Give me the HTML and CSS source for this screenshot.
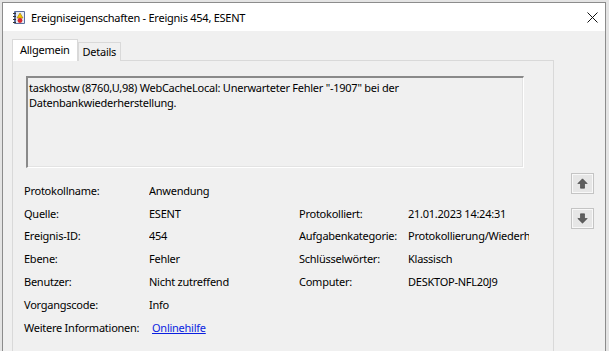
FILE: index.html
```html
<!DOCTYPE html>
<html lang="de">
<head>
  <meta charset="UTF-8">
  <meta name="viewport" content="width=device-width, initial-scale=1.0">
  <title>Ereigniseigenschaften - Ereignis 454, ESENT</title>
  <link rel="stylesheet" href="styles.css">
</head>
<body>
  <div class="window">
    <div class="titlebar">
      <svg class="app-icon" width="14" height="15" viewBox="0 0 14 15">
        <rect x="2" y="1" width="11" height="13" rx="1" fill="#5b6f9e"/>
        <rect x="4" y="2" width="8" height="11" fill="#e8ecf4"/>
        <rect x="1" y="3" width="3" height="1" fill="#333"/>
        <rect x="1" y="6" width="3" height="1" fill="#333"/>
        <rect x="1" y="9" width="3" height="1" fill="#333"/>
        <rect x="1" y="12" width="3" height="1" fill="#333"/>
        <polygon points="8,3 11,8 5,8" fill="#f5c400" stroke="#a07800" stroke-width="0.6"/>
        <circle cx="8" cy="10.5" r="2.4" fill="#d8282f"/>
      </svg>
      <span class="title">Ereigniseigenschaften - Ereignis 454, ESENT</span>
      <span class="close-btn">
        <svg width="11" height="11" viewBox="0 0 11 11">
          <path d="M0.5 0.5 L10.5 10.5 M10.5 0.5 L0.5 10.5" stroke="#111" stroke-width="1"/>
        </svg>
      </span>
    </div>

    <div class="content">
      <div class="sheet-area">
        <div class="tabs">
          <div class="tab active">Allgemein</div>
          <div class="tab">Details</div>
        </div>
        <div class="sheet">
          <div class="message">taskhostw (8760,U,98) WebCacheLocal: Unerwarteter Fehler "-1907" bei der Datenbankwiederherstellung.</div>

          <div class="fields">
            <span class="label">Protokollname:</span>
            <span class="value">Anwendung</span>
            <span></span>
            <span></span>

            <span class="label">Quelle:</span>
            <span class="value">ESENT</span>
            <span class="label">Protokolliert:</span>
            <span class="value">21.01.2023 14:24:31</span>

            <span class="label">Ereignis-ID:</span>
            <span class="value">454</span>
            <span class="label">Aufgabenkategorie:</span>
            <span class="value">Protokollierung/Wiederherstellung</span>

            <span class="label">Ebene:</span>
            <span class="value">Fehler</span>
            <span class="label">Schlüsselwörter:</span>
            <span class="value">Klassisch</span>

            <span class="label">Benutzer:</span>
            <span class="value">Nicht zutreffend</span>
            <span class="label">Computer:</span>
            <span class="value">DESKTOP-NFL20J9</span>

            <span class="label">Vorgangscode:</span>
            <span class="value">Info</span>
            <span></span>
            <span></span>

            <span class="label">Weitere Informationen:</span>
            <span class="value"><a href="#" class="help-link">Onlinehilfe</a></span>
            <span></span>
            <span></span>
          </div>
        </div>
      </div>

      <div class="nav-buttons">
        <button class="nav-btn" title="Vorheriges Ereignis">
          <svg width="11" height="11" viewBox="0 0 11 11">
            <polygon points="5.5,0.8 10.2,5.5 7.5,5.5 7.5,10.2 3.5,10.2 3.5,5.5 0.8,5.5" fill="#5e5e5e" stroke="#3e3e3e" stroke-width="0.6"/>
          </svg>
        </button>
        <button class="nav-btn" title="Nächstes Ereignis">
          <svg width="11" height="11" viewBox="0 0 11 11">
            <polygon points="5.5,10.2 10.2,5.5 7.5,5.5 7.5,0.8 3.5,0.8 3.5,5.5 0.8,5.5" fill="#5e5e5e" stroke="#3e3e3e" stroke-width="0.6"/>
          </svg>
        </button>
      </div>
    </div>
  </div>
</body>
</html>
```

FILE: styles.css
```css
    html, body {
      height: 100%;
    }
    body {
      font-family: 'Noto Sans', 'Open Sans', sans-serif;
      font-size: 11px;
      letter-spacing: -0.25px;
      margin: 0;
      padding: 0;
      background: #e4e4e4;
      color: #000;
      overflow: hidden;
    }
    .window {
      margin: 2px 3px 0 2px;
      height: calc(100% - 2px);
      border: 1px solid #8c8c8c;
      border-bottom: none;
      background: #f0f0f0;
      display: flex;
      flex-direction: column;
    }
    .titlebar {
      height: 28px;
      background: #fff;
      display: flex;
      align-items: center;
      padding-left: 9px;
    }
    .app-icon {
      flex: none;
      margin-top: 1px;
    }
    .title {
      margin-left: 5px;
      white-space: nowrap;
    }
    .close-btn {
      margin-left: auto;
      margin-right: 7px;
      display: flex;
      align-items: center;
    }
    .content {
      flex: 1;
      display: flex;
      padding: 9px 0 0 9px;
    }
    .sheet-area {
      width: 542px;
      display: flex;
      flex-direction: column;
    }
    .tabs {
      display: flex;
      align-items: flex-end;
      height: 21px;
      margin-bottom: -1px;
      position: relative;
      z-index: 1;
    }
    .tab {
      height: 18px;
      line-height: 17px;
      padding: 0 4px;
      border: 1px solid #d9d9d9;
      border-bottom: none;
      background: #f0f0f0;
      white-space: nowrap;
    }
    .tab.active {
      height: 21px;
      line-height: 20px;
      padding: 0 7px;
      background: #fff;
      border-color: #d9d9d9;
    }
    .sheet {
      flex: 1;
      border: 1px solid #d9d9d9;
      background: #f0f0f0;
      padding: 15px 0 0 11px;
    }
    .message {
      margin-left: 2px;
      width: 494px;
      height: 87px;
      border-top: 2px solid #8a8a8a;
      border-left: 2px solid #8a8a8a;
      border-right: 1px solid #fff;
      border-bottom: 1px solid #fff;
      box-shadow: inset -1px -1px 0 #e3e3e3;
      padding: 2px 0 0 1px;
      line-height: 15px;
      box-sizing: content-box;
    }
    .fields {
      margin-top: 11px;
      display: grid;
      grid-template-columns: 125px 150px 109px 121px;
      grid-auto-rows: 22.8px;
      align-items: center;
      white-space: nowrap;
    }
    .fields .value {
      overflow: hidden;
    }
    .help-link {
      margin-left: 3px;
      color: #0a1fe0;
      text-decoration: underline;
    }
    .nav-buttons {
      display: flex;
      flex-direction: column;
      gap: 14px;
      margin: 133px 0 0 17px;
    }
    .nav-btn {
      width: 23px;
      height: 21px;
      padding: 0;
      display: flex;
      align-items: center;
      justify-content: center;
      background: #e6e6e6;
      border: 1px solid #c4c4c4;
      box-shadow: inset 0 0 0 1px #f8f8f8;
    }
```
